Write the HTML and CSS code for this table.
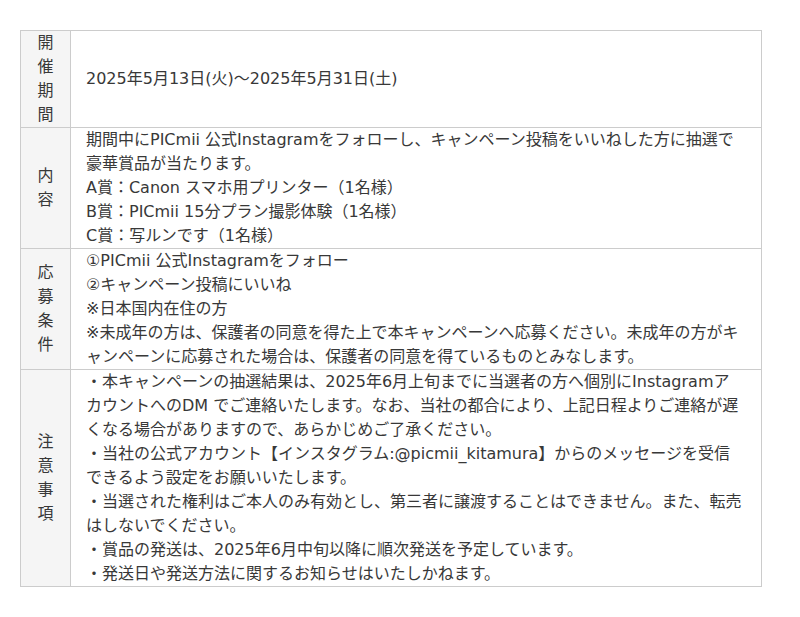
FILE: index.html
```html
<!DOCTYPE html>
<html lang="ja">
<head>
<meta charset="UTF-8">
<meta name="viewport" content="width=device-width, initial-scale=1.0">
<title>キャンペーン概要</title>
<link rel="stylesheet" href="styles.css">
</head>
<body>
<div class="wrap">
  <table class="info-table">
    <tr>
      <th>開催期間</th>
      <td>2025年5月13日(火)〜2025年5月31日(土)</td>
    </tr>
    <tr>
      <th>内容</th>
      <td>
        期間中にPICmii 公式Instagramをフォローし、キャンペーン投稿をいいねした方に抽選で豪華賞品が当たります。<br>
        A賞：Canon スマホ用プリンター（1名様）<br>
        B賞：PICmii 15分プラン撮影体験（1名様）<br>
        C賞：写ルンです（1名様）
      </td>
    </tr>
    <tr>
      <th>応募条件</th>
      <td>
        ①PICmii 公式Instagramをフォロー<br>
        ②キャンペーン投稿にいいね<br>
        ※日本国内在住の方<br>
        ※未成年の方は、保護者の同意を得た上で本キャンペーンへ応募ください。未成年の方がキャンペーンに応募された場合は、保護者の同意を得ているものとみなします。
      </td>
    </tr>
    <tr>
      <th>注意事項</th>
      <td>
        ・本キャンペーンの抽選結果は、2025年6月上旬までに当選者の方へ個別にInstagramアカウントへのDM でご連絡いたします。なお、当社の都合により、上記日程よりご連絡が遅くなる場合がありますので、あらかじめご了承ください。<br>
        ・当社の公式アカウント【インスタグラム:@picmii_kitamura】からのメッセージを受信できるよう設定をお願いいたします。<br>
        ・当選された権利はご本人のみ有効とし、第三者に譲渡することはできません。また、転売はしないでください。<br>
        ・賞品の発送は、2025年6月中旬以降に順次発送を予定しています。<br>
        ・発送日や発送方法に関するお知らせはいたしかねます。
      </td>
    </tr>
  </table>
</div>
</body>
</html>
```

FILE: styles.css
```css
body {
  margin: 0;
  background: #fff;
  color: #383838;
  font-family: "DejaVu Sans", "Noto Sans CJK JP", sans-serif;
  font-size: 16px;
  line-height: 24px;
}

.wrap { padding: 30px 38px 0 20px; }

.info-table {
  width: 742px;
  border-collapse: collapse;
}

.info-table th,
.info-table td {
  border: 1px solid #ccc;
  vertical-align: middle;
}

/* Narrow label column: one character per line */
.info-table th {
  width: 25px;
  padding: 0 12px;
  background: #f5f5f5;
  font-weight: normal;
  text-align: center;
}

.info-table td {
  padding: 0 16px 0 15px;
  text-align: left;
}
```
